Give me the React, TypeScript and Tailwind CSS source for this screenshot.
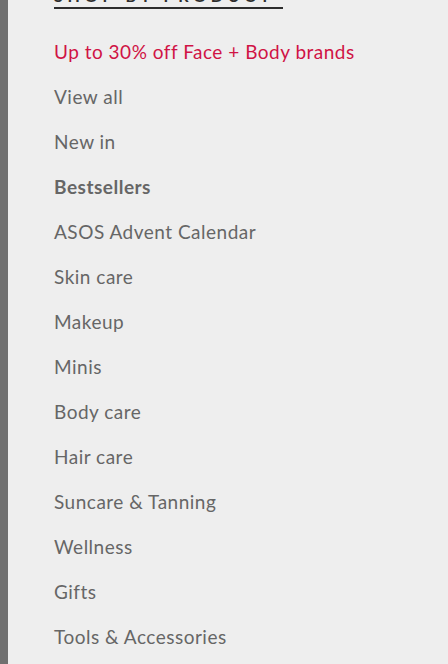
import React from 'react'

const items = [
    { name: 'Up to 30% off Face + Body brands', sale: true },
    { name: 'View all' },
    { name: 'New in' },
    { name: 'Bestsellers', bold: true },
    { name: 'ASOS Advent Calendar' },
    { name: 'Skin care' },
    { name: 'Makeup' },
    { name: 'Minis' },
    { name: 'Body care' },
    { name: 'Hair care' },
    { name: 'Suncare & Tanning' },
    { name: 'Wellness' },
    { name: 'Gifts' },
    { name: 'Tools & Accessories' },
]

const App = () => {
    return (
        <div className='flex h-[664px] w-[448px] overflow-hidden bg-[#eeeeee] font-["Lato",sans-serif]'>
            <div className='w-2 shrink-0 bg-[#707070]' />
            <div className='flex flex-col pl-[46px]'>
                {/* heading is scrolled mostly out of view */}
                <div className='-mt-[12px] w-[229px] border-b-2 border-[#2d2d2d] pb-[3px]'>
                    <h2 className='text-[16px] font-bold uppercase leading-[16px] tracking-[0.3em] text-[#2d2d2d] whitespace-nowrap'>
                        Shop by product
                    </h2>
                </div>
                <ul className='mt-[21px] flex flex-col'>
                    {items.map((item, index) => (
                        <li
                            key={index}
                            className={
                                'flex h-[45px] items-center text-[19px] tracking-[0.5px] whitespace-nowrap ' +
                                (item.sale ? 'text-[#d01345] ' : 'text-[#666666] ') +
                                (item.bold ? 'font-bold' : 'font-normal')
                            }
                        >
                            {item.name}
                        </li>
                    ))}
                </ul>
            </div>
        </div>
    )
}

export default App
